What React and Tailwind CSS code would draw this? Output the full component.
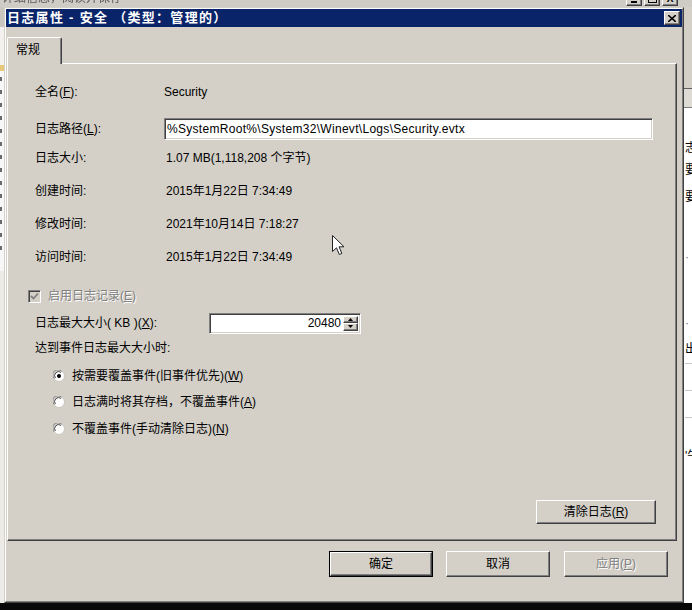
import { useState } from 'react';

const raised =
  'border border-t-white border-l-white border-r-[#404040] border-b-[#404040] shadow-[inset_-1px_-1px_0_#808080]';
const sunken =
  'border border-t-[#808080] border-l-[#808080] border-r-white border-b-white shadow-[inset_1px_1px_0_#404040,inset_-1px_-1px_0_#d4d0c8]';
const disabledText = 'text-[#808080] [text-shadow:1px_1px_0_#fff]';

function Acc({ k }) {
  return (
    <>
      (<u>{k}</u>)
    </>
  );
}

function InfoRow({ label, children, className = '' }) {
  return (
    <div className={`flex items-center h-[16px] ${className}`}>
      <div className="w-[129px] shrink-0">{label}</div>
      <div className="pl-[2px]">{children}</div>
    </div>
  );
}

function Radio({ checked, children, className = '' }) {
  return (
    <div className={`flex items-center h-[16px] ml-[18px] gap-[7px] ${className}`}>
      <svg width="12" height="12" viewBox="0 0 12 12">
        <circle cx="6" cy="6" r="5.5" fill="#fff" stroke="#c8c5bf" />
        <path d="M1.2 8.6 A5.2 5.2 0 0 1 8.6 1.2" fill="none" stroke="#808080" />
        <path d="M2.4 8 A4 4 0 0 1 8 2.4" fill="none" stroke="#404040" />
        {checked && <circle cx="6" cy="6" r="2" fill="#000" />}
      </svg>
      <span>{children}</span>
    </div>
  );
}

function Button({ children, disabled, isDefault, className = '' }) {
  const inner = (
    <div
      className={`flex items-center justify-center bg-[#d4d0c8] w-full h-full ${raised} ${
        disabled ? disabledText : ''
      }`}
    >
      {children}
    </div>
  );
  if (isDefault) {
    return <div className={`border border-black ${className}`}>{inner}</div>;
  }
  return <div className={className}>{inner}</div>;
}

function TopStrip() {
  return (
    <div className="h-[7px] bg-[#cfccc6] flex justify-between overflow-hidden">
      <div className="mt-[-10px] pl-[2px] text-[12px] leading-[16px] text-[#5a5a5a] whitespace-nowrap blur-[0.4px]">
        详细信息，阅读并保存
      </div>
      <div className="flex gap-[2px] mr-[14px] mt-[-8px]">
        <div className={`w-[16px] h-[14px] bg-[#d4d0c8] ${raised} flex items-end justify-center`}>
          <div className="w-[6px] h-[2px] bg-black mb-[2px]" />
        </div>
        <div className={`w-[16px] h-[14px] bg-[#d4d0c8] ${raised} flex items-center justify-center`}>
          <div className="w-[9px] h-[8px] border border-black border-t-2" />
        </div>
        <div className={`w-[16px] h-[14px] bg-[#d4d0c8] ${raised} flex items-center justify-center text-[10px] font-bold`}>
          X
        </div>
      </div>
    </div>
  );
}

function LeftStrip() {
  return (
    <div className="w-[4px] bg-[#e4e2de] flex flex-col">
      <div className="h-[20px] bg-[#c9c6c0]" />
      <div className="h-[38px] bg-[#f2f1ef]" />
      <div className="h-[6px] bg-[#e6c878]" />
      <div className="h-[200px] bg-[#f7f7f7] flex flex-col gap-[9px] pt-[6px]">
        {Array.from({ length: 14 }).map((_, i) => (
          <div key={i} className="h-[4px] w-[2px] bg-[#6a6a6a]" />
        ))}
      </div>
      <div className="flex-1 bg-[#ecebe8]" />
    </div>
  );
}

function RightStrip() {
  return (
    <div className="w-[8px] overflow-hidden flex flex-col text-[12px] leading-[16px]">
      <div className="h-[81px] bg-[#d4d0c8]" />
      <div className="h-px bg-[#606060]" />
      <div className="h-[18px] bg-[#dedbd5]" />
      <div className="h-px bg-[#808080]" />
      <div className="flex-1 bg-white flex flex-col whitespace-nowrap pl-px">
        <div className="mt-[32px]">志</div>
        <div className="mt-[6px]">要</div>
        <div className="mt-[11px]">要</div>
        <div className="mt-[44px] text-[#777]">·</div>
        <div className="mt-[50px] text-[#777]">·</div>
        <div className="mt-[10px]">出</div>
        <div className="mt-[6px] h-px bg-[#c8c8c8]" />
        <div className="mt-[26px] h-px bg-[#c8c8c8]" />
        <div className="mt-[26px] h-px bg-[#c8c8c8]" />
        <div className="mt-[30px]">'牛</div>
      </div>
    </div>
  );
}

function Dialog() {
  const [size] = useState('20480');
  return (
    <div className="w-[680px] border border-t-[#d4d0c8] border-l-[#d4d0c8] border-r-[#404040] border-b-[#404040]">
      <div className="h-full flex flex-col bg-[#d4d0c8] border border-t-white border-l-white border-r-[#808080] border-b-[#808080]">
        {/* Title bar */}
        <div className="h-[18px] bg-[#0a246a] flex items-center justify-between pl-[1px] pr-[2px]">
          <span className="text-white font-bold text-[13px] tracking-[1.3px] whitespace-nowrap">
            日志属性 - 安全 （类型：管理的）
          </span>
          <div className={`w-[16px] h-[14px] bg-[#d4d0c8] ${raised} flex items-center justify-center`}>
            <svg width="8" height="7" viewBox="0 0 8 7">
              <path d="M0 0 L8 7 M8 0 L0 7" stroke="#000" strokeWidth="1.6" />
            </svg>
          </div>
        </div>

        {/* Tab strip */}
        <div className="mt-[10px] ml-[1px] flex -mb-px relative z-10">
          <div className="w-[55px] h-[27px] bg-[#d4d0c8] border border-b-0 border-t-white border-l-white border-r-[#404040] shadow-[inset_-1px_0_0_#808080] rounded-tl-[2px] rounded-tr-[2px] pl-[8px] pt-[4px]">
            常规
          </div>
        </div>

        {/* Tab panel */}
        <div className={`ml-[1px] w-[670px] h-[478px] flex flex-col pl-[27px] pt-[20px] ${raised}`}>
          <InfoRow label={<>全名<Acc k="F" />:</>}>
            <span className="-ml-[2px]">Security</span>
          </InfoRow>

          <div className="flex items-center h-[22px] mt-[18px]">
            <div className="w-[129px] shrink-0">
              日志路径<Acc k="L" />:
            </div>
            <div className={`w-[489px] h-[22px] bg-white flex items-center px-[2px] tracking-[0.3px] ${sunken}`}>
              %SystemRoot%\System32\Winevt\Logs\Security.evtx
            </div>
          </div>

          <InfoRow label="日志大小:" className="mt-[10px]">
            1.07 MB(1,118,208 个字节)
          </InfoRow>
          <InfoRow label="创建时间:" className="mt-[17px]">
            2015年1月22日 7:34:49
          </InfoRow>
          <InfoRow label="修改时间:" className="mt-[17px]">
            2021年10月14日 7:18:27
          </InfoRow>
          <InfoRow label="访问时间:" className="mt-[17px]">
            2015年1月22日 7:34:49
          </InfoRow>

          {/* Enable logging (disabled) */}
          <div className="flex items-center h-[16px] mt-[23px] -ml-[7px] gap-[7px]">
            <div className="w-[13px] h-[13px] border border-t-[#808080] border-l-[#808080] border-r-white border-b-white shadow-[inset_1px_1px_0_#404040] bg-[#d4d0c8] flex items-center justify-center">
              <svg width="9" height="9" viewBox="0 0 9 9">
                <path d="M1 4 L3.5 6.5 L8 1.5" fill="none" stroke="#808080" strokeWidth="1.8" />
              </svg>
            </div>
            <span className={disabledText}>
              启用日志记录<Acc k="E" />
            </span>
          </div>

          {/* Max size */}
          <div className="flex items-center h-[22px] mt-[8px]">
            <div className="w-[174px] shrink-0">
              日志最大大小( KB )<Acc k="X" />:
            </div>
            <div className={`w-[152px] h-[21px] bg-white flex items-stretch ${sunken} p-[2px]`}>
              <div className="flex-1 flex items-center justify-end pr-[2px]">{size}</div>
              <div className="w-[15px] flex flex-col">
                <div className={`flex-1 bg-[#d4d0c8] ${raised} flex items-center justify-center`}>
                  <svg width="5" height="3" viewBox="0 0 5 3">
                    <path d="M0 3 L2.5 0 L5 3 Z" fill="#000" />
                  </svg>
                </div>
                <div className={`flex-1 bg-[#d4d0c8] ${raised} flex items-center justify-center`}>
                  <svg width="5" height="3" viewBox="0 0 5 3">
                    <path d="M0 0 L2.5 3 L5 0 Z" fill="#000" />
                  </svg>
                </div>
              </div>
            </div>
          </div>

          <div className="flex items-center h-[16px] mt-[6px]">达到事件日志最大大小时:</div>

          <Radio checked className="mt-[12px]">
            按需要覆盖事件(旧事件优先)<Acc k="W" />
          </Radio>
          <Radio className="mt-[10px]">
            日志满时将其存档，不覆盖事件<Acc k="A" />
          </Radio>
          <Radio className="mt-[11px]">
            不覆盖事件(手动清除日志)<Acc k="N" />
          </Radio>

          <div className="flex justify-end mt-[63px] pr-[20px]">
            <Button className="w-[120px] h-[24px]">
              清除日志<Acc k="R" />
            </Button>
          </div>
        </div>

        {/* Dialog buttons */}
        <div className="flex justify-end gap-[13px] mt-[10px] pr-[14px]">
          <Button isDefault className="w-[104px] h-[26px]">
            确定
          </Button>
          <Button className="w-[104px] h-[26px]">取消</Button>
          <Button disabled className="w-[104px] h-[26px] ml-[1px]">
            应用<Acc k="P" />
          </Button>
        </div>
      </div>
    </div>
  );
}

function Cursor() {
  return (
    <svg
      className="absolute left-[332px] top-[235px]"
      width="13"
      height="21"
      viewBox="0 0 13 21"
    >
      <path
        d="M0.5 0.5 L0.5 16.5 L4.5 12.8 L7.3 19.5 L9.8 18.4 L7.1 11.8 L12 11.8 Z"
        fill="#fff"
        stroke="#222"
        strokeWidth="1"
        strokeLinejoin="round"
      />
    </svg>
  );
}

export default function App() {
  return (
    <div className="relative w-[692px] h-[610px] overflow-hidden bg-black flex flex-col font-['Liberation_Sans','Noto_Sans_CJK_SC',sans-serif] text-[12px] leading-[16px] text-black">
      <TopStrip />
      <div className="flex h-[596px]">
        <LeftStrip />
        <Dialog />
        <RightStrip />
      </div>
      <div className="flex-1 bg-[#080808]" />
      <Cursor />
    </div>
  );
}
